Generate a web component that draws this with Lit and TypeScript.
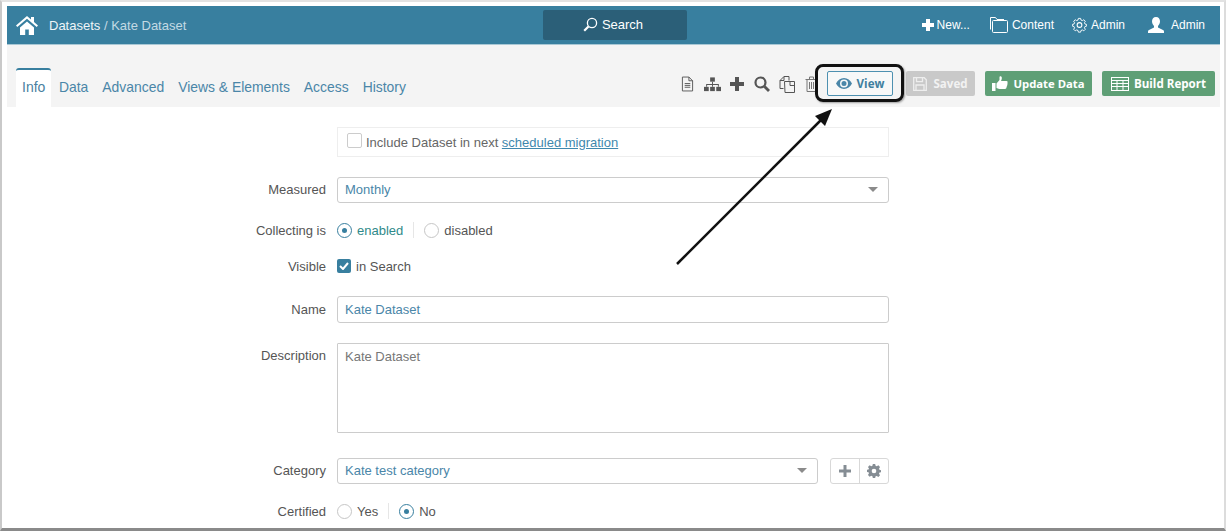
import { LitElement, html, css } from "lit";
import { customElement } from "lit/decorators.js";

const caret = html`<svg class="caret" width="10" height="5" viewBox="0 0 10 5"><path d="M0 0h10L5 5z" fill="#8b8b8b"/></svg>`;

@customElement("app-root")
export class AppRoot extends LitElement {
  static styles = css`
    :host { display: block; width: 1227px; height: 531px; overflow: hidden; position: relative; background: #fff; font-family: "Liberation Sans", Arial, sans-serif; color: #555; font-size: 13px; box-sizing: border-box; }
    * { box-sizing: border-box; }
    .frame { height: 531px; margin-right: 1px; border-top: 2px solid #e2e2e2; border-left: 2px solid #c9c9c9; border-right: 2px solid #dcdcdc; border-bottom: 3px solid #8a8a8a; padding: 4px 4px 0 5px; overflow: hidden; }
    .top { height: 39px; background: #387f9f; border-bottom: 1px solid #a9c8d5; display: grid; grid-template-columns: 536px 144px 1fr; align-items: center; color: #fff; }
    .left { display: flex; align-items: center; padding-left: 9px; }
    .crumb { margin-left: 11px; font-size: 13px; color: #c3dae4; }
    .crumb b { font-weight: normal; color: #eef5f8; }
    .search { height: 30px; background: #2b5f78; border-radius: 2px; display: flex; align-items: center; justify-content: center; gap: 4px; color: #fff; font-size: 13px; margin-top: -1px; padding-right: 4px; }
    .right { display: flex; justify-content: flex-end; align-items: center; padding-right: 15px; font-size: 12px; }
    .right span { display: flex; align-items: center; gap: 4px; }
    .n1 { margin-right: 20px; } .n2 { margin-right: 18px; } .n3 { margin-right: 23px; }
    .right .n1 { gap: 3px; }
    .right .n4 { gap: 7px; }
    .bar { height: 62px; background: #f4f4f4; display: flex; justify-content: space-between; padding: 23px 5px 0 9px; }
    .tabs { display: flex; align-items: flex-end; height: 39px; }
    .tab { font-size: 13.9px; color: #4a86a8; margin-right: 14px; padding-bottom: 12px; }
    .tab.on { background: #fff; color: #4a7f9f; border-top: 2px solid #387f9f; border-radius: 3px 3px 0 0; height: 39px; padding: 9px 6px 0; margin-right: 8px; width: 35px; font-size: 14px; }
    .tools { display: flex; align-items: flex-start; }
    .ic { display: flex; gap: 9.6px; align-items: center; height: 28px; margin: 2px 9px 0 0; }
    .btn { height: 25px; margin-top: 3px; border-radius: 2px; display: flex; align-items: center; justify-content: center; font-family: "Open Sans", sans-serif; font-weight: 700; font-size: 11.6px; color: #fff; gap: 4px; }
    .view { width: 66px; border: 1px solid #4d90b0; background: #f7f8f8; color: #3f7f9f; margin-right: 13px; gap: 5px; }
    .saved { width: 69px; background: #c9c9c9; margin-right: 10px; color: #f2f2f2; gap: 6px; }
    .green { background: #5f9f76; }
    .update { width: 107px; margin-right: 10px; gap: 5px; font-size: 11.3px; }
    .build { width: 113px; gap: 5px; }
    .form { width: 882px; margin-top: 20px; display: flex; flex-direction: column; }
    .row { display: grid; grid-template-columns: 319px 552px; column-gap: 11px; }
    .row > label { text-align: right; color: #555; font-size: 13px; }
    .row > label.up { padding-bottom: 2px; }
    .center { align-items: center; }
    .mig { height: 30px; border: 1px solid #eeeeee; display: flex; align-items: center; padding-left: 9px; gap: 4px; color: #666; font-size: 13px; }
    .mig a { color: #3f88ad; text-decoration: underline; }
    .box { width: 15px; height: 15px; border: 1px solid #ccc; border-radius: 2px; margin-top: -3px; background: #fff; }
    .input { height: 26px; border: 1px solid #ccc; border-radius: 3px; padding: 0 7px 2px; display: flex; align-items: center; justify-content: space-between; color: #4a86a8; font-size: 13px; }
    .tall { height: 27px; padding-bottom: 0; }
    .caret { margin-right: 3px; }
    .area { height: 90px; border: 1px solid #ccc; border-radius: 1px; padding: 5px 7px; color: #777; font-size: 13px; }
    .opts { display: flex; align-items: center; color: #555; font-size: 13px; }
    .radio { width: 15px; height: 15px; border-radius: 50%; border: 1.5px solid #c6c6c6; margin-right: 5px; }
    .radio.on { border: 1.5px solid #387f9f; display: flex; align-items: center; justify-content: center; }
    .radio.on::after { content: ""; width: 5px; height: 5px; border-radius: 50%; background: #387f9f; }
    .sep { width: 1px; height: 16px; background: #e6e6e6; margin: 0 10px; }
    .teal { color: #2f8a8a; }
    .check { width: 14px; height: 14px; background: #387f9f; border-radius: 2px; display: flex; align-items: center; justify-content: center; margin-right: 5px; }
    .cat { display: flex; gap: 12px; }
    .cat .input { width: 481px; }
    .group { width: 59px; height: 26px; border: 1px solid #d8d8d8; border-radius: 3px; display: flex; }
    .group div { flex: 1; display: flex; align-items: center; justify-content: center; }
    .group div + div { border-left: 1px solid #d8d8d8; }
    .m20 { margin-top: 20px; }
    .m25 { margin-top: 25px; }
    .h20 { height: 20px; }
    .m17 { margin-top: 17px; }
    .m16 { margin-top: 16px; }
    .desc { padding-top: 5px; }
    .overlay { position: absolute; left: 0; top: 0; pointer-events: none; }
    .hl { position: absolute; left: 815px; top: 64px; width: 89px; height: 38px; border: 3px solid #111; border-radius: 8px; box-shadow: 1px 1px 2px rgba(0,0,0,.35); }
  `;

  render() {
    const home = html`<svg width="22" height="19" viewBox="0 0 22 19"><path fill="#fff" d="M11 0 L0 9.5 1.3 11 11 2.8 20.7 11 22 9.5 18 6V1h-3v2.4zM4 11.5V19h5.2v-5.500h3.600V19H18v-7.500L11 5.500z"/></svg>`;
    return html`
      <div class="frame">
        <div class="top">
          <div class="left">${home}<span class="crumb"><b>Datasets</b> / Kate Dataset</span></div>
          <div class="search">
            <svg width="15" height="15" viewBox="0 0 15 15" fill="none" stroke="#fff"><circle cx="9" cy="6" r="4.600" stroke-width="1.300"/><path d="M5.500 9.500 1.200 13.800" stroke-width="2.200"/></svg>
            Search
          </div>
          <div class="right">
            <span class="n1"><svg width="12" height="12" viewBox="0 0 12 12"><path fill="#fff" d="M4 0h4v4h4v4H8v4H4V8H0V4h4z"/></svg>New...</span>
            <span class="n2"><svg width="18" height="16" viewBox="0 0 18 16" fill="none" stroke="#fff" stroke-width="1"><path d="M.5 12.500V.5h5l1.500 2h7"/><rect x="2.500" y="3.500" width="15" height="12" rx="1"/></svg>Content</span>
            <span class="n3"><svg width="15" height="16" viewBox="0 0 24 24" fill="none" stroke="#fff" stroke-width="1.700"><circle cx="12" cy="12" r="3.800"/><path d="M10 1.500h4l.7 3 2.500 1 2.600-1.600 2.800 2.800-1.600 2.600 1 2.500 3 .7v3l-3 .7-1 2.500 1.600 2.600-2.800 2.800-2.600-1.600-2.500 1-.7 3h-4l-.7-3-2.500-1-2.600 1.600-2.800-2.800 1.600-2.600-1-2.500-3-.7v-3l3-.7 1-2.500-1.600-2.600 2.800-2.800 2.600 1.600 2.500-1z" transform="translate(12 12) scale(.88) translate(-12 -13.500)"/></svg>Admin</span>
            <span class="n4"><svg width="16" height="16" viewBox="0 0 16 16"><path fill="#fff" d="M8 0c2.600 0 4 2 4 4.300 0 2-1 3.700-2 4.700v1.500l5 2.500c.6.300 1 .8 1 1.500V16H0v-1.500c0-.7.400-1.200 1-1.500l5-2.500V9C5 8 4 6.300 4 4.300 4 2 5.400 0 8 0z"/></svg>Admin</span>
          </div>
        </div>
        <div class="bar">
          <div class="tabs">
            <div class="tab on">Info</div>
            <div class="tab">Data</div><div class="tab">Advanced</div><div class="tab">Views &amp; Elements</div><div class="tab">Access</div><div class="tab">History</div>
          </div>
          <div class="tools">
            <div class="ic">
              <svg width="13" height="16" viewBox="0 0 14 16" fill="none" stroke="#555"><path d="M1.500 .5h7l4 4v11h-11z"/><path d="M8.500 .5v4h4M4 7.500h6M4 9.500h6M4 11.500h6"/></svg>
              <svg width="17" height="15" viewBox="0 0 18 15" fill="#555"><rect x="6.500" y="0" width="5" height="4.500"/><rect x="0" y="10" width="5" height="4.500"/><rect x="6.500" y="10" width="5" height="4.500"/><rect x="13" y="10" width="5" height="4.500"/><path d="M8.500 4.500h1V7h6.200v3h-1V8H9.500v2h-1V8H3.300v2h-1V7h6.200z"/></svg>
              <svg width="14" height="14" viewBox="0 0 14 14"><path fill="#555" d="M5 0h4v5h5v4H9v5H5V9H0V5h5z"/></svg>
              <svg width="16" height="16" viewBox="0 0 16 16" fill="none" stroke="#555"><circle cx="6.500" cy="6.500" r="5" stroke-width="2.200"/><path d="M10.500 10.500 15 15" stroke-width="2.800"/></svg>
              <svg width="16" height="17" viewBox="0 0 16 17" fill="none" stroke="#555"><path d="M4.500 12.500H1V4.500L5 .5h5v4"/><path d="M5 .5v4H1"/><path d="M5.500 5.500h10v11h-9.500z"/><path d="M11 5.500v4h4.500"/></svg>
              <svg width="13" height="16" viewBox="0 0 13 16" fill="none" stroke="#777"><path d="M.5 3.500h12M2 3.500v12h9v-12M4.500 3V1h4v2M4.500 6v7M6.500 6v7M8.500 6v7"/></svg>
            </div>
            <div class="btn view">
              <svg width="16" height="11" viewBox="0 0 16 11"><path fill="#4a86a8" fill-rule="evenodd" d="M8 0c3.500 0 6.300 2.400 8 5.500C14.300 8.600 11.500 11 8 11S1.700 8.600 0 5.500C1.700 2.400 4.500 0 8 0zm0 1.500a4 4 0 1 0 0 8 4 4 0 0 0 0-8zM8 3a2.500 2.500 0 1 1 0 5 2.500 2.500 0 0 1 0-5z"/></svg>
              View
            </div>
            <div class="btn saved">
              <svg width="14" height="14" viewBox="0 0 14 14" fill="none" stroke="#eee" stroke-width="1.300"><path d="M.7.700h10.500l2.100 2.100v10.500H.7z"/><path d="M3.500.7v4h6v-4M3 13.300V8h8v5.300"/></svg>
              Saved
            </div>
            <div class="btn green update">
              <svg width="16" height="15" viewBox="0 0 16 15"><path fill="#fff" d="M0 7h3.500v8H0zM4.500 7.500 7.500 4V1c0-1 2-1 2.300.5.200 1-.3 2.500-.8 3.500h5.500c1.200 0 1.500 1.300.8 2 .5.700.4 1.500-.2 2 .3.800 0 1.500-.6 1.800.2 1-.3 2.200-1.500 2.200H7.500c-1.500 0-2-.8-3-1z"/></svg>
              Update Data
            </div>
            <div class="btn green build">
              <svg width="18" height="14" viewBox="0 0 18 14" fill="none" stroke="#fff"><rect x=".5" y=".5" width="17" height="13"/><path d="M.5 3.500h17M.5 6.500h17M.5 9.500h17M6 3.500v10M12 3.500v10"/></svg>
              Build Report
            </div>
          </div>
        </div>
        <div class="form">
          <div class="row"><div></div>
            <div class="mig"><div class="box"></div><span>Include Dataset in next <a>scheduled migration</a></span></div>
          </div>
          <div class="row center m20"><label class="up">Measured</label><div class="input">Monthly${caret}</div></div>
          <div class="row center m17 h20"><label>Collecting is</label>
            <div class="opts"><div class="radio on"></div><span class="teal">enabled</span><div class="sep"></div><div class="radio"></div>disabled</div></div>
          <div class="row center m16 h20"><label>Visible</label>
            <div class="opts"><div class="check"><svg width="10" height="8" viewBox="0 0 10 8" fill="none" stroke="#fff" stroke-width="2"><path d="M1 4l3 3 5-6"/></svg></div>in Search</div></div>
          <div class="row center m20"><label>Name</label><div class="input tall">Kate Dataset</div></div>
          <div class="row m20"><label class="desc">Description</label><div class="area">Kate Dataset</div></div>
          <div class="row center m25"><label class="up">Category</label>
            <div class="cat"><div class="input">Kate test category${caret}</div>
              <div class="group">
                <div><svg width="12" height="12" viewBox="0 0 12 12"><path fill="#858d94" d="M4.500 0h3v4.500H12v3H7.500V12h-3V7.500H0v-3h4.500z"/></svg></div>
                <div><svg width="14" height="14" viewBox="0 0 24 24"><path fill="#858d94" fill-rule="evenodd" d="M10 0h4l.7 3.200 2 .8 2.800-1.700 2.800 2.800L20.600 8l.8 2 2.600.5v3.500l-2.600.5-.8 2 1.700 2.800-2.800 2.800-2.800-1.700-2 .8L14 24h-4l-.7-3.200-2-.8-2.800 1.700-2.800-2.800L3.400 16l-.8-2L0 13.500V10l2.600-.5.800-2L1.700 5l2.800-2.800L7.300 4l2-.8zM12 8a4 4 0 1 0 0 8 4 4 0 0 0 0-8z"/></svg></div>
              </div>
            </div></div>
          <div class="row center m17 h20"><label>Certified</label>
            <div class="opts"><div class="radio"></div>Yes<div class="sep"></div><div class="radio on"></div>No</div></div>
        </div>
      </div>
      <div class="hl"></div>
      <svg class="overlay" width="1227" height="531">
        <path d="M677 264 824 117" stroke="#111" stroke-width="2.500" fill="none"/>
        <path d="M832 109 L815 116 L825 126 z" fill="#111"/>
      </svg>
    `;
  }
}
